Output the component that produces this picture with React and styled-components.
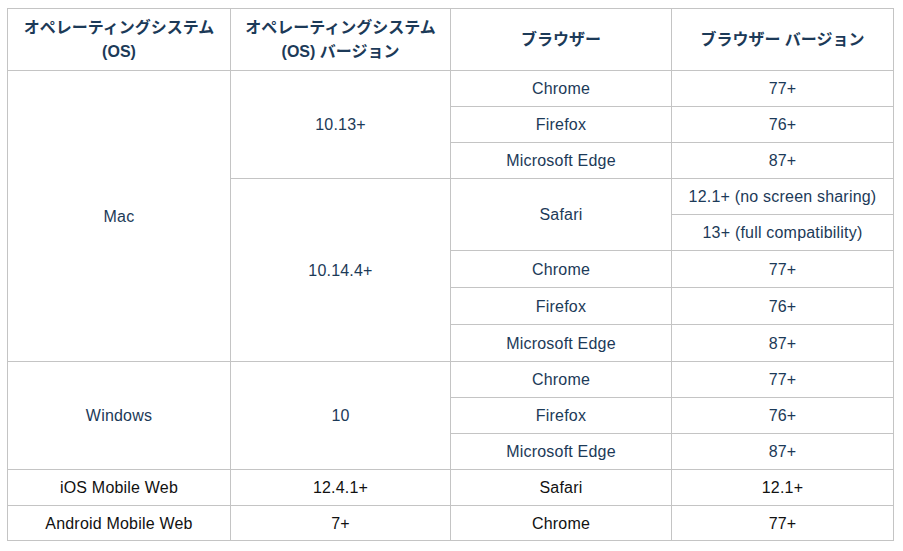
import React from "react"
import styled, { createGlobalStyle } from "styled-components"

const GlobalStyle = createGlobalStyle`
  body {
    margin: 0;
    padding: 8px 0 0 7px;
    background: #fff;
    font-family: "Liberation Sans", Arial, "Noto Sans CJK JP", sans-serif;
  }
`

const Table = styled.table`
  border-collapse: collapse;
  width: 886px;
  table-layout: fixed;
  font-size: 16px;
  letter-spacing: 0.2px;
  color: #1c3a58;
`

const HeadCell = styled.th`
  border: 1px solid #c4c4c4;
  padding: 7px 4px 6px;
  height: 62px;
  box-sizing: border-box;
  font-weight: bold;
  line-height: 24px;
  letter-spacing: 0;
  text-align: center;
  font-family: "Liberation Sans", "Noto Sans CJK JP", sans-serif;
`

const Cell = styled.td`
  border: 1px solid #c4c4c4;
  padding: 0 6px;
  height: ${p => p.$h || 35}px;
  line-height: 19px;
  text-align: center;
  vertical-align: middle;
  color: ${p => (p.$dark ? "#111" : "inherit")};
`

const App = () => (
  <>
    <GlobalStyle />
    <Table>
      <colgroup>
        <col style={{ width: 223 }} />
        <col style={{ width: 220 }} />
        <col style={{ width: 221 }} />
        <col style={{ width: 222 }} />
      </colgroup>
      <thead>
        <tr>
          <HeadCell>
            オペレーティングシステム
            <br />
            (OS)
          </HeadCell>
          <HeadCell>
            オペレーティングシステム
            <br />
            (OS) バージョン
          </HeadCell>
          <HeadCell>ブラウザー</HeadCell>
          <HeadCell>ブラウザー バージョン</HeadCell>
        </tr>
      </thead>
      <tbody>
        <tr>
          <Cell rowSpan={8}>Mac</Cell>
          <Cell rowSpan={3}>10.13+</Cell>
          <Cell>Chrome</Cell>
          <Cell>77+</Cell>
        </tr>
        <tr>
          <Cell>Firefox</Cell>
          <Cell>76+</Cell>
        </tr>
        <tr>
          <Cell>Microsoft Edge</Cell>
          <Cell>87+</Cell>
        </tr>
        <tr>
          <Cell rowSpan={5}>10.14.4+</Cell>
          <Cell rowSpan={2}>Safari</Cell>
          <Cell>12.1+ (no screen sharing)</Cell>
        </tr>
        <tr>
          <Cell>13+ (full compatibility)</Cell>
        </tr>
        <tr>
          <Cell $h={36}>Chrome</Cell>
          <Cell $h={36}>77+</Cell>
        </tr>
        <tr>
          <Cell $h={36}>Firefox</Cell>
          <Cell $h={36}>76+</Cell>
        </tr>
        <tr>
          <Cell $h={36}>Microsoft Edge</Cell>
          <Cell $h={36}>87+</Cell>
        </tr>
        <tr>
          <Cell rowSpan={3}>Windows</Cell>
          <Cell rowSpan={3}>10</Cell>
          <Cell>Chrome</Cell>
          <Cell>77+</Cell>
        </tr>
        <tr>
          <Cell>Firefox</Cell>
          <Cell>76+</Cell>
        </tr>
        <tr>
          <Cell>Microsoft Edge</Cell>
          <Cell>87+</Cell>
        </tr>
        <tr>
          <Cell $dark>iOS Mobile Web</Cell>
          <Cell $dark>12.4.1+</Cell>
          <Cell $dark>Safari</Cell>
          <Cell $dark>12.1+</Cell>
        </tr>
        <tr>
          <Cell $dark $h={34}>Android Mobile Web</Cell>
          <Cell $dark $h={34}>7+</Cell>
          <Cell $dark $h={34}>Chrome</Cell>
          <Cell $dark $h={34}>77+</Cell>
        </tr>
      </tbody>
    </Table>
  </>
)

export default App
